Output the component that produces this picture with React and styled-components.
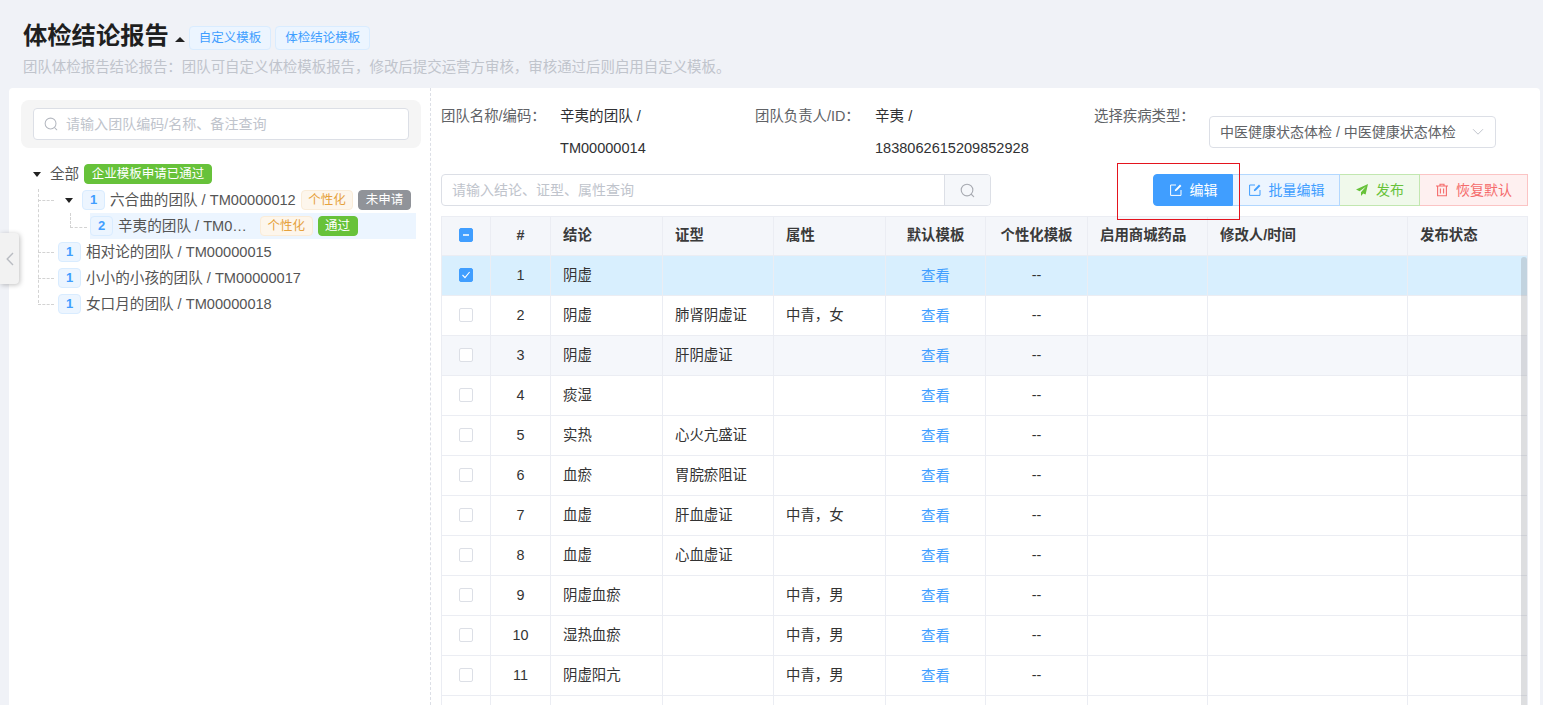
import React from "react";
import styled, { createGlobalStyle } from "styled-components";

const Global = createGlobalStyle`
  html, body { margin: 0; height: 705px; overflow: hidden; background: #f0f2f7; }
  body { font-family: "Liberation Sans", "Noto Sans CJK SC", sans-serif; font-size: 14px; line-height: 20px; color: #303133; }
  * { box-sizing: border-box; }
`;

const Page = styled.div`display: flex; flex-direction: column; height: 705px; overflow: hidden; position: relative;`;
const Header = styled.header`height: 88px; padding: 18px 23px 0;`;
const TitleRow = styled.div`display: flex; align-items: center; height: 36px;`;
const Title = styled.h1`margin: 0; font-size: 24.3px; line-height: 36px; font-weight: 700; color: #1f1f1f;`;
const TitleCaret = styled.span`
  width: 0; height: 0; margin: 6px 4px 0 6px;
  border-left: 5px solid transparent; border-right: 5px solid transparent; border-bottom: 5px solid #222;
`;
const HeadTag = styled.span`
  height: 24px; line-height: 22px; padding: 0 9px; margin: 4px 4px 0 0; font-size: 12.5px;
  color: #409eff; background: #ecf5ff; border: 1px solid #d9ecff; border-radius: 4px;
`;
const Subtitle = styled.p`margin: 3px 0 0; font-size: 14.45px; line-height: 20px; color: #c0c4cc;`;

const Card = styled.main`
  flex: 1; display: flex; margin: 0 3px 0 9px; background: #fff; border-radius: 4px 4px 0 0; overflow: hidden;
`;
const LeftPanel = styled.aside`
  width: 422px; flex: none; padding: 12px 9px 0 12px; border-right: 1px dashed #dcdfe6;
`;
const SearchBox = styled.div`padding: 8px 12px; background: #f5f5f5; border-radius: 8px;`;
const SearchInput = styled.div`
  display: flex; align-items: center; gap: 8px; height: 32px; padding: 0 10px; background: #fff;
  border: 1px solid #dcdfe6; border-radius: 4px; color: #c0c4cc; font-size: 14.05px;
`;
const Tree = styled.div`margin-top: 13px;`;
const TreeGroup = styled.div`
  position: relative;
  &::before { content: ""; position: absolute; left: 17px; top: 2px; bottom: 14px; border-left: 1px dashed #d3d3d3; }
`;
const TreeRow = styled.div`
  position: relative; display: flex; align-items: center; height: 26px;
  padding-left: ${p => p.$pad || 0}px;
  margin-left: ${p => p.$indent || 0}px;
  margin-right: ${p => p.$indent ? 5 : 0}px;
  background: ${p => p.$active ? "#ecf5ff" : "transparent"};
  ${p => p.$branch === "top" && `&::before { content: ""; position: absolute; left: 17px; width: 16px; top: 13px; border-top: 1px dashed #d3d3d3; }`}
  ${p => p.$branch === "sub" && `&::before { content: ""; position: absolute; left: -20px; width: 16px; top: 0; height: 14px; border-left: 1px dashed #d3d3d3; border-bottom: 1px dashed #d3d3d3; }`}
`;
const Caret = styled.span`
  flex: none; width: 0; height: 0; margin-right: 9px;
  border-left: 4.5px solid transparent; border-right: 4.5px solid transparent; border-top: 5px solid #222;
`;
const Level = styled.span`
  flex: none; width: 23px; height: 20px; margin-right: 5px; text-align: center; line-height: 18px;
  font-size: 13px; font-weight: 700; color: #409eff; background: #ecf5ff; border: 1px solid #d9ecff; border-radius: 4px;
`;
const Name = styled.span`
  font-size: 14.6px; color: #555; white-space: nowrap; margin-right: 5px;
  ${p => p.$clip && `width: 137px; overflow: hidden; text-overflow: ellipsis;`}
`;
const Tag = styled.span`
  flex: none; height: 20px; line-height: 18px; padding: 0 6.5px; margin-right: 5px; font-size: 12.5px; border-radius: 4px; border: 1px solid;
  ${p => p.$kind === "orange" && `color: #e6a23c; background: #fdf6ec; border-color: #faecd8;`}
  ${p => p.$kind === "green" && `color: #fff; background: #67c23a; border-color: #67c23a;`}
  ${p => p.$kind === "gray" && `color: #fff; background: #909399; border-color: #909399;`}
`;
const Handle = styled.button`
  position: absolute; left: 0; top: 233px; width: 19px; height: 51px; padding: 0; border: 0;
  display: flex; align-items: center; justify-content: center;
  background: #f2f2f2; border-radius: 0 4px 4px 0; box-shadow: 1px 1px 5px rgba(0,0,0,.25);
`;

const RightPanel = styled.section`flex: 1; min-width: 0; padding: 12px 12px 0 10px; position: relative;`;
const InfoRow = styled.div`display: flex; height: 64px; line-height: 32px; font-size: 14.4px;`;
const InfoItem = styled.div`display: flex; width: ${p => p.$w}px; flex: none;`;
const InfoLabel = styled.span`flex: none; width: ${p => p.$w}px; color: #606266; white-space: nowrap;`;
const InfoValue = styled.span`width: 165px; font-size: 14.55px; color: #303133; word-break: break-word;`;
const Select = styled.div`
  width: 287px; height: 32px; margin-top: 16px; padding: 0 11px 0 10px; display: flex; align-items: center; justify-content: space-between;
  border: 1px solid #dcdfe6; border-radius: 4px; color: #606266; font-size: 14px; white-space: nowrap;
`;
const Toolbar = styled.div`display: flex; justify-content: space-between; align-items: flex-start; height: 42px; margin-top: 10px;`;
const QueryBox = styled.div`
  display: flex; width: 550px; height: 32px; border: 1px solid #dcdfe6; border-radius: 4px; overflow: hidden;
`;
const QueryText = styled.div`flex: 1; padding: 0 10px; line-height: 30px; color: #c0c4cc; font-size: 14px;`;
const QueryBtn = styled.div`
  width: 46px; display: flex; align-items: center; justify-content: center; background: #f5f7fa; border-left: 1px solid #dcdfe6;
`;
const BtnGroup = styled.div`display: flex; position: relative;`;
const palette = {
  primary: "color:#fff;background:#409eff;border-color:#409eff;",
  blue: "color:#409eff;background:#ecf5ff;border-color:#b3d8ff;",
  green: "color:#67c23a;background:#f0f9eb;border-color:#c2e7b0;",
  red: "color:#f56c6c;background:#fef0f0;border-color:#fbc4c4;",
};
const Btn = styled.button`
  width: ${p => p.$w}px; height: 32px; padding: 0; display: flex; align-items: center; justify-content: center; gap: 7px;
  font: inherit; font-size: 14px; border: 1px solid; border-left-width: 0;
  ${p => palette[p.$kind]}
  &:first-child { border-left-width: 1px; border-radius: 4px 0 0 4px; }
  &:last-child { border-radius: 0 4px 4px 0; }
`;
const Marker = styled.div`
  position: absolute; z-index: 2; left: -36px; top: -11px; width: 123px; height: 57px; border: 1px solid #e4141e; pointer-events: none;
`;

const TableWrap = styled.div`position: relative;`;
const Table = styled.table`
  width: 1086px; table-layout: fixed; border-collapse: collapse; font-size: 14.4px; line-height: 20px;
`;
const Th = styled.th`
  height: 39px; padding: 0 12px 2px; background: #f4f6fa; border: 1px solid #ebedf3; font-weight: 700; color: #3a3a3a;
  text-align: ${p => p.$center ? "center" : "left"}; white-space: nowrap;
`;
const Tr = styled.tr`background: ${p => p.$tone === "sel" ? "#d8effe" : p.$tone === "alt" ? "#f5f7fb" : "#fff"};`;
const Td = styled.td`
  height: 40px; padding: 0 12px 1px; border: 1px solid #ebedf3; color: #333;
  text-align: ${p => p.$center ? "center" : "left"}; white-space: nowrap;
`;
const ViewLink = styled.a`display: inline-block; padding-top: 2px; color: #409eff;`;
const Check = styled.span`
  display: flex; margin: 0 auto 1px; align-items: center; justify-content: center; width: 14px; height: 14px; border-radius: 2px;
  border: 1px solid ${p => p.$on ? "#409eff" : "#dcdfe6"}; background: ${p => p.$on ? "#409eff" : "#fff"};
`;
const Scrollbar = styled.div`
  position: absolute; right: 1px; top: 41px; width: 6px; height: 500px; border-radius: 3px 3px 0 0; background: rgba(144,147,153,.3);
`;

const SearchIcon = ({ size = 14, color = "#b4b8c0" }) => (
  <svg width={size} height={size} viewBox="0 0 16 16" fill="none" stroke={color} strokeWidth="1.2">
    <circle cx="7.5" cy="7.5" r="6.2" /><path d="M12 12l2.6 2.6" strokeLinecap="round" />
  </svg>
);
const EditIcon = ({ color }) => (
  <svg width="14" height="14" viewBox="0 0 14 14" fill="none" stroke={color} strokeWidth="1">
    <path d="M7 2H1.6v10.4H12V7" /><path d="M5.8 8.2l.4-1.8L11 1.6l1.4 1.4-4.8 4.8z" fill={color} stroke="none" />
  </svg>
);
const SendIcon = ({ color }) => (
  <svg width="14" height="14" viewBox="0 0 14 14" fill={color}>
    <path d="M13 1L1 6.4l3.6 1.8L11 3.4 6 9.2v3.8l2.2-2.6 2.4 1.2z" />
  </svg>
);
const TrashIcon = ({ color }) => (
  <svg width="14" height="14" viewBox="0 0 14 14" fill="none" stroke={color} strokeWidth="1.1">
    <path d="M1 3h12M5 3V1.2h4V3M2.6 3v9.8h8.8V3M5.4 5.6v4.8M8.6 5.6v4.8" />
  </svg>
);
const ChevronDown = () => (
  <svg width="12" height="8" viewBox="0 0 12 8" fill="none" stroke="#c0c4cc" strokeWidth="1"><path d="M1 1.2l5 5 5-5" /></svg>
);
const ChevronLeft = () => (
  <svg width="8" height="14" viewBox="0 0 8 14" fill="none" stroke="#b9bcc2" strokeWidth="1.4"><path d="M7 1L1.2 7 7 13" /></svg>
);
const Minus = () => <svg width="10" height="10" viewBox="0 0 10 10"><path d="M2 5h6" stroke="#fff" strokeWidth="1.4" /></svg>;
const Tick = () => <svg width="10" height="10" viewBox="0 0 10 10" fill="none"><path d="M1.5 5l2.5 2.6L8.6 2" stroke="#fff" strokeWidth="1.1" /></svg>;

const colWidths = [49, 60, 112, 111, 112, 100, 102, 120, 200, 120];
const rows = [
  [1, "阴虚", "", ""],
  [2, "阴虚", "肺肾阴虚证", "中青，女"],
  [3, "阴虚", "肝阴虚证", ""],
  [4, "痰湿", "", ""],
  [5, "实热", "心火亢盛证", ""],
  [6, "血瘀", "胃脘瘀阻证", ""],
  [7, "血虚", "肝血虚证", "中青，女"],
  [8, "血虚", "心血虚证", ""],
  [9, "阴虚血瘀", "", "中青，男"],
  [10, "湿热血瘀", "", "中青，男"],
  [11, "阴虚阳亢", "", "中青，男"],
];

export default function App() {
  return (
    <Page>
      <Global />
      <Header>
        <TitleRow>
          <Title>体检结论报告</Title>
          <TitleCaret />
          <HeadTag>自定义模板</HeadTag>
          <HeadTag>体检结论模板</HeadTag>
        </TitleRow>
        <Subtitle>团队体检报告结论报告：团队可自定义体检模板报告，修改后提交运营方审核，审核通过后则启用自定义模板。</Subtitle>
      </Header>
      <Card>
        <LeftPanel>
          <SearchBox>
            <SearchInput><SearchIcon />请输入团队编码/名称、备注查询</SearchInput>
          </SearchBox>
          <Tree>
            <TreeRow $pad={12}>
              <Caret />
              <Name>全部</Name>
              <Tag $kind="green">企业模板申请已通过</Tag>
            </TreeRow>
            <TreeGroup>
              <TreeRow $pad={44} $branch="top">
                <Caret /><Level>1</Level>
                <Name>六合曲的团队 / TM00000012</Name>
                <Tag $kind="orange">个性化</Tag><Tag $kind="gray">未申请</Tag>
              </TreeRow>
              <TreeRow $indent={69} $active $branch="sub">
                <Level>2</Level>
                <Name $clip>辛夷的团队 / TM00000014</Name>
                <Tag $kind="orange">个性化</Tag><Tag $kind="green">通过</Tag>
              </TreeRow>
              <TreeRow $pad={37} $branch="top"><Level>1</Level><Name>相对论的团队 / TM00000015</Name></TreeRow>
              <TreeRow $pad={37} $branch="top"><Level>1</Level><Name>小小的小孩的团队 / TM00000017</Name></TreeRow>
              <TreeRow $pad={37} $branch="top"><Level>1</Level><Name>女口月的团队 / TM00000018</Name></TreeRow>
            </TreeGroup>
          </Tree>
        </LeftPanel>
        <RightPanel>
          <InfoRow>
            <InfoItem $w={314}>
              <InfoLabel $w={119}>团队名称/编码：</InfoLabel>
              <InfoValue>辛夷的团队 / TM00000014</InfoValue>
            </InfoItem>
            <InfoItem $w={339}>
              <InfoLabel $w={120}>团队负责人/ID：</InfoLabel>
              <InfoValue>辛夷 / 1838062615209852928</InfoValue>
            </InfoItem>
            <InfoItem $w={402}>
              <InfoLabel $w={115}>选择疾病类型：</InfoLabel>
              <Select>中医健康状态体检 / 中医健康状态体检<ChevronDown /></Select>
            </InfoItem>
          </InfoRow>
          <Toolbar>
            <QueryBox>
              <QueryText>请输入结论、证型、属性查询</QueryText>
              <QueryBtn><SearchIcon size={15} color="#a8abb2" /></QueryBtn>
            </QueryBox>
            <BtnGroup>
              <Btn $kind="primary" $w={80}><EditIcon color="#fff" />编辑</Btn>
              <Btn $kind="blue" $w={107}><EditIcon color="#409eff" />批量编辑</Btn>
              <Btn $kind="green" $w={80}><SendIcon color="#67c23a" />发布</Btn>
              <Btn $kind="red" $w={108}><TrashIcon color="#f56c6c" />恢复默认</Btn>
              <Marker />
            </BtnGroup>
          </Toolbar>
          <TableWrap>
            <Table>
              <colgroup>{colWidths.map((w, i) => <col key={i} width={w} />)}</colgroup>
              <thead>
                <tr>
                  <Th $center><Check $on><Minus /></Check></Th>
                  <Th $center>#</Th>
                  <Th>结论</Th>
                  <Th>证型</Th>
                  <Th>属性</Th>
                  <Th $center>默认模板</Th>
                  <Th $center>个性化模板</Th>
                  <Th>启用商城药品</Th>
                  <Th>修改人/时间</Th>
                  <Th>发布状态</Th>
                </tr>
              </thead>
              <tbody>
                {rows.map(([n, a, b, c]) => (
                  <Tr key={n} $tone={n === 1 ? "sel" : n === 3 ? "alt" : undefined}>
                    <Td $center><Check $on={n === 1}>{n === 1 && <Tick />}</Check></Td>
                    <Td $center>{n}</Td>
                    <Td>{a}</Td>
                    <Td>{b}</Td>
                    <Td>{c}</Td>
                    <Td $center><ViewLink>查看</ViewLink></Td>
                    <Td $center>--</Td>
                    <Td /><Td /><Td />
                  </Tr>
                ))}
                <Tr><Td /><Td /><Td /><Td /><Td /><Td /><Td /><Td /><Td /><Td /></Tr>
              </tbody>
            </Table>
            <Scrollbar />
          </TableWrap>
        </RightPanel>
      </Card>
      <Handle aria-label="collapse"><ChevronLeft /></Handle>
    </Page>
  );
}
